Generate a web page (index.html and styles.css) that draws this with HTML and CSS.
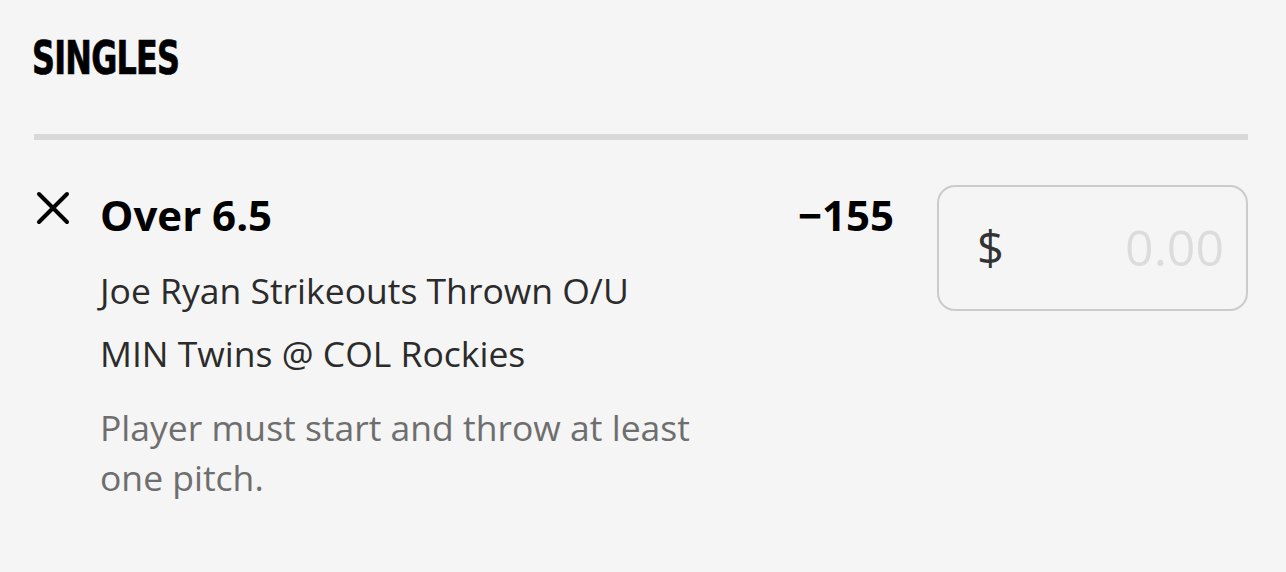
FILE: index.html
```html
<!DOCTYPE html>
<html>
<head>
<meta charset="utf-8">
<link rel="stylesheet" href="styles.css">
</head>
<body>
<div class="slip">
  <h2 class="heading">SINGLES</h2>
  <div class="divider"></div>
  <div class="bet">
    <div class="remove">
      <svg width="36" height="36" viewBox="0 0 36 36"><path d="M4 4 L32 32 M32 4 L4 32" stroke="#000" stroke-width="4" stroke-linecap="round" fill="none"/></svg>
    </div>
    <div class="info">
      <div class="top-row">
        <div class="selection">Over 6.5</div>
        <div class="odds">&minus;155</div>
      </div>
      <div class="market">Joe Ryan Strikeouts Thrown O/U</div>
      <div class="event">MIN Twins @ COL Rockies</div>
      <div class="note">Player must start and throw at least one pitch.</div>
    </div>
    <div class="stake">
      <span class="currency">$</span>
      <span class="placeholder">0.00</span>
    </div>
  </div>
</div>
</body>
</html>
```
FILE: styles.css
```css
html, body {
  margin: 0;
  padding: 0;
  background: #f5f5f5;
}
body {
  font-family: "Open Sans", "Liberation Sans", sans-serif;
  color: #000;
}
.slip {
  padding: 30px 38px 0 34px;
}
.heading {
  margin: 0 0 0 -2px;
  font-family: "DejaVu Sans Condensed", "DejaVu Sans", sans-serif;
  font-weight: 700;
  font-size: 46px;
  line-height: 56px;
  letter-spacing: -1px;
  -webkit-text-stroke: 0.7px #000;
  transform: scaleX(0.77);
  transform-origin: left center;
}
.divider {
  margin-top: 48px;
  height: 6px;
  background: #d9d9d9;
}
.bet {
  display: flex;
  align-items: flex-start;
  padding-top: 46px;
}
.remove {
  width: 66px;
  flex: none;
  padding-top: 4px;
  padding-left: 1px;
  box-sizing: border-box;
}
.remove svg { display: block; }
.info {
  flex: 1;
}
.top-row {
  display: flex;
  justify-content: space-between;
  align-items: baseline;
}
.selection, .odds {
  font-size: 42px;
  font-weight: 700;
  line-height: 58px;
}
.market, .event {
  font-size: 35.5px;
  line-height: 48px;
  color: #2b2b2b;
}
.market { margin-top: 22px; }
.event { margin-top: 15px; }
.note {
  font-size: 35.5px;
  line-height: 50px;
  color: #6e6e6e;
  margin-top: 25px;
  max-width: 600px;
}
.stake {
  flex: none;
  width: 311px;
  height: 126px;
  margin-top: -1px;
  box-sizing: border-box;
  margin-left: 43px;
  border: 2px solid #cbcbcb;
  border-radius: 18px;
  display: flex;
  align-items: center;
  justify-content: space-between;
  padding: 0 22px 2px 38px;
}
.currency {
  font-size: 47px;
  color: #333;
}
.placeholder {
  font-size: 50px;
  color: #dcdcdc;
}
```
